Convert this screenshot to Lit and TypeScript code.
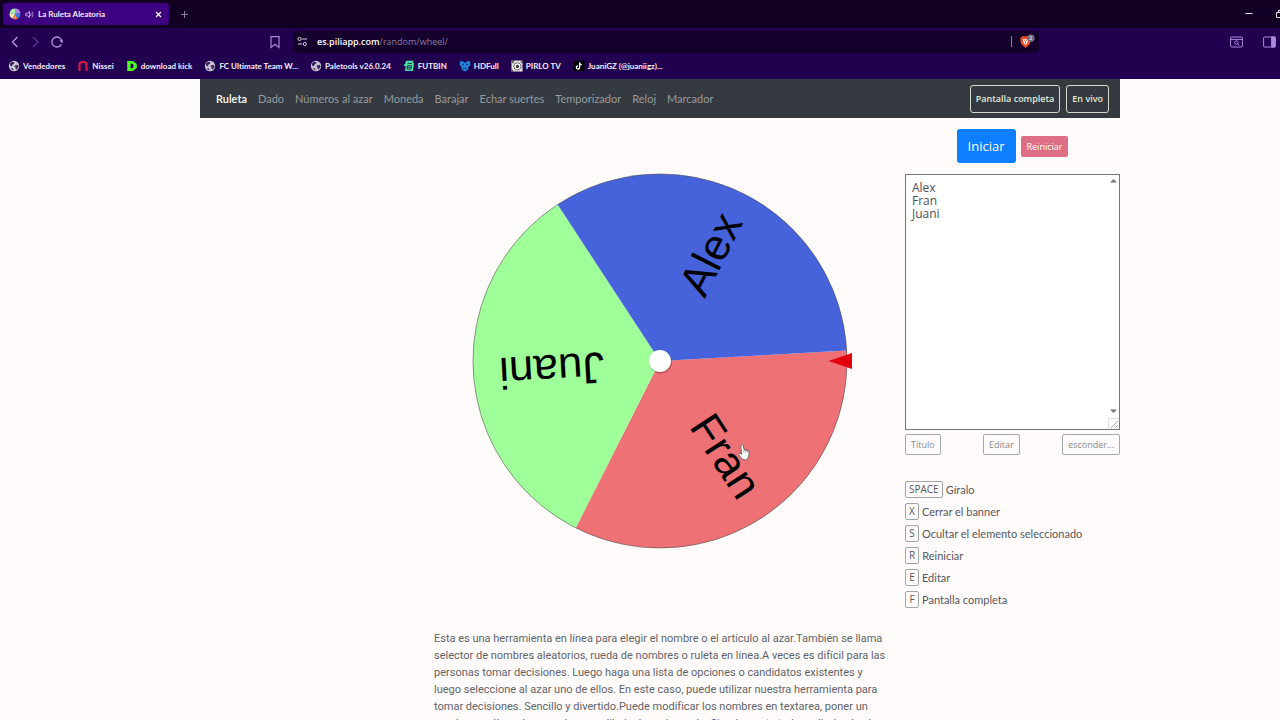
import { LitElement, html, css, svg } from "lit";
import { customElement, property } from "lit/decorators.js";

const UI_FONT = css`"Open Sans", "Noto Sans", sans-serif`;
const TEXT_FONT = css`Lato, "Open Sans", sans-serif`;

const globe = html`<svg class="ico" viewBox="0 0 12 12" aria-hidden="true">
  <circle cx="6" cy="6" r="5.2" fill="#c9c4d4" />
  <path d="M2 3.2 4 1.8 6.4 2.2 6 4 4.2 4.8 3.8 6.4 2 5.6zM7 5.6 9.6 4.8 10.6 6.6 8.8 9.6 7.4 8.6 7.6 7.2 6.4 6.6zM3 8l2 .4.6 1.8L4 9.8z" fill="#3a2560" />
</svg>`;
const nissei = html`<svg class="ico" viewBox="0 0 12 12" aria-hidden="true">
  <path d="M2.5 11V4.5Q2.5 2 6 2t3.5 2.5V11" fill="none" stroke="#d81848" stroke-width="2.2" />
</svg>`;
const kick = html`<svg class="ico" viewBox="0 0 12 12" aria-hidden="true">
  <path d="M1.200 1H7L10.800 4V8L7 11H1.200zM4.600 3.800V8.200H6.400L7.400 7.400V4.600L6.400 3.800z" fill="#4dfb22" fill-rule="evenodd" />
</svg>`;
const futbin = html`<svg class="ico" viewBox="0 0 12 12" aria-hidden="true">
  <path d="M3 .8h7.6L9.800 3H11L10 11H2L2.800 6H.8L1.200 4.200H2z" fill="#4fe3a4" />
  <path d="M4.600 3.400H9M4.400 5.600h4L8 9.200H4zM4 7.400h4.200" fill="none" stroke="#1c3a54" stroke-width="1" />
</svg>`;
const hdfull = html`<svg class="ico" viewBox="0 0 12 12" aria-hidden="true">
  <path d="M1 1.400 3.400 1 6 3 8.600 1 11 1.400 11.400 5 9.600 6.400 9 9.600 6 11.400 3 9.600 2.400 6.400.6 5z" fill="#2388e0" />
  <circle cx="4" cy="4.400" r=".9" fill="#10296b" /><circle cx="8" cy="4.400" r=".9" fill="#10296b" />
  <path d="M4 8.200h4" stroke="#10296b" stroke-width=".8" />
</svg>`;
const pirlo = html`<svg class="ico" viewBox="0 0 12 12" aria-hidden="true">
  <rect x=".5" y=".5" width="11" height="11" fill="#e9e6e2" />
  <path d="M.5.5h3L2 4zM11.500.5V4L9.400 1.600zM.5 11.500V8.400L3 11.500z" fill="#4d4a48" />
  <circle cx="6.400" cy="6.400" r="3.600" fill="#fff" stroke="#4a4642" stroke-width=".8" />
  <path d="M6.400 4.600 8.200 6 7.500 8H5.300L4.600 6z" fill="#3b3733" />
</svg>`;
const tiktok = html`<svg class="ico" viewBox="0 0 12 12" aria-hidden="true">
  <rect x=".4" y=".4" width="11.200" height="11.200" rx="2" fill="#050308" />
  <path d="M6.600 2.600V7.400A1.600 1.600 0 1 1 5 5.800M6.600 2.800Q7 4.600 8.800 4.800" fill="none" stroke="#fff" stroke-width="1.300" />
</svg>`;

const BOOKMARKS = [
  { icon: globe, label: "Vendedores" },
  { icon: nissei, label: "Nissei" },
  { icon: kick, label: "download kick" },
  { icon: globe, label: "FC Ultimate Team W..." },
  { icon: globe, label: "Paletools v26.0.24" },
  { icon: futbin, label: "FUTBIN" },
  { icon: hdfull, label: "HDFull" },
  { icon: pirlo, label: "PIRLO TV" },
  { icon: tiktok, label: "JuaniGZ (@juaniigz)..." },
];

@customElement("browser-chrome")
export class BrowserChrome extends LitElement {
  static styles = css`
    :host { display: block; font-family: ${UI_FONT}; color: #f3eefc; background: #210050; }
    button { font: inherit; color: inherit; background: none; border: 0; padding: 0; display: flex; cursor: pointer; }
    .tabs { display: flex; align-items: center; height: 28px; background: #120024; padding: 0 0 0 3px; }
    .tab { display: flex; align-items: center; gap: 4px; width: 166px; height: 22px; box-sizing: border-box; padding: 0 7px 0 6px; background: #3d0080; border-radius: 4px; }
    .title { flex: 1; white-space: nowrap; }
    .plus { margin-left: 11px; }
    .window { margin-left: auto; display: flex; gap: 23px; overflow: hidden; width: 35px; }
    .bar { display: flex; align-items: center; height: 27px; padding-left: 8px; }
    .nav { display: flex; gap: 7px; align-items: center; flex: 1 0 260px; max-width: 260px; }
    .address { display: flex; align-items: center; flex: 1 1 740px; max-width: 746px; height: 22px; box-sizing: border-box; padding: 0 3px 0 4px; margin-left: 11px; background: #14002a; border-radius: 4px; }
    .url { flex: 1; margin-left: 9px; font-size: 9px; color: #8d7fa6; text-decoration: none; }
    .url b { font-weight: 600; color: #fff; }
    .divider { width: 1px; height: 11px; background: #8f83a5; margin-right: 7px; }
    .side { display: flex; gap: 20px; margin-left: auto; padding-right: 4px; }
    .marks { display: flex; align-items: center; height: 24px; box-sizing: border-box; padding: 0 0 3px 8px; gap: 12px; }
    .mark { display: flex; align-items: center; gap: 3px; color: inherit; text-decoration: none; white-space: nowrap; }
    .title, .mark { font-family: Lato, "Open Sans", sans-serif; font-size: 8px; font-weight: 700; }
    .ico { width: 12px; height: 12px; flex: none; }
  `;
  render() {
    return html`
      <div class="tabs">
        <div class="tab">
          <svg width="12" height="12" viewBox="0 0 12 12" aria-hidden="true">
            <path d="M6 6V.6A5.400 5.400 0 0 1 11.300 5z" fill="#b58ae8" /><path d="M6 6 11.300 5A5.400 5.400 0 0 1 8.600 10.700z" fill="#3a7fe0" />
            <path d="M6 6 8.600 10.700A5.400 5.400 0 0 1 3.200 10.600z" fill="#ee8058" /><path d="M6 6 3.200 10.600A5.400 5.400 0 0 1 .7 5z" fill="#f2f0b4" />
            <path d="M6 6 .7 5A5.400 5.400 0 0 1 6 .6z" fill="#a6efae" />
          </svg>
          <svg width="9" height="9" viewBox="0 0 9 9" fill="none" stroke="#c9b6ec" aria-hidden="true">
            <path d="M.8 3.200h1.600L4.400 1.400v6.200L2.400 5.800H.8z" /><path d="M5.600 3q1 1.500 0 3M7 1.600q2.200 2.900 0 5.800" stroke-width=".8" />
          </svg>
          <span class="title">La Ruleta Aleatoria</span>
          <button aria-label="Cerrar pestaña"><svg width="7" height="7" viewBox="0 0 7 7"><path d="M1 1 6 6M6 1 1 6" stroke="#fff" stroke-width="1.200" /></svg></button>
        </div>
        <button class="plus" aria-label="Nueva pestaña"><svg width="9" height="9" viewBox="0 0 9 9"><path d="M4.500 1v7M1 4.500h7" stroke="#8a7aa0" /></svg></button>
        <div class="window">
          <button aria-label="Minimizar"><svg width="8" height="8" viewBox="0 0 8 8"><path d="M.5 3.500h7" stroke="#e8e2f0" /></svg></button>
          <button aria-label="Restaurar"><svg width="9" height="8" viewBox="0 0 9 8" fill="none" stroke="#e8e2f0"><path d="M2.500 2.500V.5h6v6h-2M.5 2.500h6v5h-6z" /></svg></button>
        </div>
      </div>
      <div class="bar">
        <div class="nav">
          <button aria-label="Atrás"><svg width="14" height="14" viewBox="0 0 14 14" fill="none" stroke="#b59be0" stroke-width="1.300"><path d="M9.500 2 4.500 7l5 5" /></svg></button>
          <button aria-label="Adelante"><svg width="14" height="14" viewBox="0 0 14 14" fill="none" stroke="#5c3a92" stroke-width="1.300"><path d="M4 2l5 5-5 5" /></svg></button>
          <button aria-label="Recargar"><svg width="14" height="14" viewBox="0 0 14 14" fill="none" stroke="#b59be0" stroke-width="1.300"><path d="M11.400 9.200A5 5 0 1 1 11.800 6" /><path d="M9.400 5.400H13L12.400 8.200z" fill="#b59be0" stroke="none" /></svg></button>
        </div>
        <button aria-label="Añadir marcador"><svg width="14" height="14" viewBox="0 0 14 14" fill="none" stroke="#a58ad2" stroke-width="1.200"><path d="M3 1.600h8V12.400L7 9.200 3 12.400z" /></svg></button>
        <div class="address">
          <svg width="11" height="11" viewBox="0 0 11 11" fill="none" stroke="#d6cbe8" aria-hidden="true"><circle cx="2.600" cy="3" r="1.600" /><path d="M5 3h5M1 8h4" /><circle cx="7.800" cy="8" r="1.600" /></svg>
          <a class="url" href="#"><b>es.piliapp.com</b>/random/wheel/</a>
          <span class="divider"></span>
          <button aria-label="Brave Shields">
            <svg width="17" height="15" viewBox="0 0 17 15"><path d="M3.200 2.200H9.800L11.800 4.400 11 10 6.500 14 2 10 1.200 4.400z" fill="#ee4a22" /><path d="M3.600 4.800 6.500 5.600 9.400 4.800 8.400 9 6.500 11 4.600 9z" fill="#fff" /><path d="M5 6.400l1.500 1.200L8 6.400M6.500 8v1.600" stroke="#ee4a22" fill="none" stroke-width=".9" /><circle cx="11.800" cy="4.200" r="3.800" fill="#706a82" /><text x="11.800" y="6.200" font-size="5" text-anchor="middle" fill="#fff">2</text></svg>
          </button>
        </div>
        <div class="side">
          <button aria-label="Buscar pestañas"><svg width="13" height="12" viewBox="0 0 13 12" fill="none" stroke="#a98bdc"><rect x=".6" y="1" width="11.800" height="10" rx="1" /><path d="M.6 3.400h11.800M7.800 8 9.200 9.400" /><circle cx="6.400" cy="6.600" r="1.700" /></svg></button>
          <button aria-label="Panel lateral"><svg width="13" height="12" viewBox="0 0 13 12" fill="none" stroke="#a98bdc"><rect x=".6" y="1" width="11.800" height="10" rx="1" /><path d="M8.600 1h3.400v10H8.600z" fill="#a98bdc" /></svg></button>
        </div>
      </div>
      <nav class="marks">
        ${BOOKMARKS.map((b) => html`<a class="mark" href="#">${b.icon}<span>${b.label}</span></a>`)}
      </nav>
    `;
  }
}

interface Slice { label: string; color: string }

@customElement("name-wheel")
export class NameWheel extends LitElement {
  @property({ attribute: false }) slices: Slice[] = [];
  @property({ type: Number }) rotation = 0;

  static styles = css`
    :host { display: block; }
    .wheel { display: block; width: 100%; height: auto; overflow: visible; }
    .label { font-family: "Liberation Sans", Arial, sans-serif; font-size: 44px; text-anchor: end; fill: #000; }
  `;

  private point(deg: number, r: number) {
    const a = (deg * Math.PI) / 180;
    return `${(r * Math.cos(a)).toFixed(2)} ${(r * Math.sin(a)).toFixed(2)}`;
  }

  render() {
    const step = 360 / this.slices.length;
    return html`<svg class="wheel" viewBox="-226 -194 452 388" role="img" aria-label="Ruleta">
      ${this.slices.map((s, i) => {
        const from = this.rotation + i * step;
        return svg`<path d="M0 0L${this.point(from, 187)}A187 187 0 0 1 ${this.point(from + step, 187)}Z" fill=${s.color} />`;
      })}
      <circle r="187" fill="none" stroke="#444" stroke-opacity=".7" stroke-width=".8" />
      ${this.slices.map((s, i) => svg`<g transform="rotate(${this.rotation + (i + 0.5) * step})"><text class="label" x="161" y="12">${s.label}</text></g>`)}
      <circle cx=".6" cy="1" r="11.400" fill="#000" opacity=".25" />
      <circle r="11" fill="#fff" />
      <path d="M168.500 0 192 -8V8z" fill="#e3000f" />
      <g transform="translate(78 83)">
        <path d="M3.400 1Q4.600 0 5.200 1.200L6 5.400 10 6.400Q11.600 7 11.200 9L10.400 13Q9.600 16 7 16 4.400 16 3.200 13.800L.6 10.400Q.4 9 2 9.200L3.600 10.400 2.800 2z" fill="#fff" stroke="#444" stroke-width=".7" />
        <path d="M6 5.400V8.400M8 5.800V8.600M9.800 6.400V8.800" stroke="#555" stroke-width=".6" />
      </g>
    </svg>`;
  }
}

const NAV = ["Ruleta", "Dado", "Números al azar", "Moneda", "Barajar", "Echar suertes", "Temporizador", "Reloj", "Marcador"];
const KEYS = [
  ["SPACE", "Gíralo"],
  ["X", "Cerrar el banner"],
  ["S", "Ocultar el elemento seleccionado"],
  ["R", "Reiniciar"],
  ["E", "Editar"],
  ["F", "Pantalla completa"],
];
const SLICES: Slice[] = [
  { label: "Fran", color: "#ee7275" },
  { label: "Juani", color: "#9fff98" },
  { label: "Alex", color: "#4763dc" },
];

@customElement("app-root")
export class AppRoot extends LitElement {
  static styles = css`
    :host { display: flex; flex-direction: column; height: 100vh; overflow: hidden; background: #fffbfb; font-family: ${TEXT_FONT}; font-size: 11px; font-variant-ligatures: none; color: #54575b; }
    button, textarea { font-family: ${UI_FONT}; }
    button { cursor: pointer; white-space: nowrap; }
    browser-chrome { flex: none; }
    .page { margin: 0 160px 0 200px; }
    .navbar { display: flex; align-items: center; height: 39px; box-sizing: border-box; padding: 0 11px 0 16px; background: #343a40; }
    .links { display: flex; gap: 11px; }
    .link { color: #989b9f; text-decoration: none; white-space: nowrap; }
    .link.active { color: #fff; font-weight: 600; }
    .actions { display: flex; gap: 6px; margin-left: auto; }
    .light { height: 28px; padding: 0 5px; font-size: 9px; font-weight: 600; color: #e4eada; background: none; border: 1px solid #d3d9cc; border-radius: 3px; }
    .content { display: grid; grid-template-columns: minmax(0, 452fr) 215px; column-gap: 19px; padding-left: 25.434%; }
    name-wheel { margin-top: 49px; }
    .about { margin: 75px 0 0; line-height: 17px; font-family: Roboto, "Open Sans", sans-serif; color: #606368; }
    .run { display: flex; align-items: center; justify-content: center; gap: 5px; height: 34px; margin: 11px 0; }
    .start { height: 34px; padding: 0 11px; font-size: 13px; color: #fff; background: #0d7efd; border: 0; border-radius: 3px; }
    .reset { height: 21px; padding: 0 6px; font-size: 9px; color: #fff; background: #de6e84; border: 0; border-radius: 2px; }
    .box { position: relative; display: flex; }
    .names { width: 100%; height: 256px; box-sizing: border-box; margin: 0; padding: 6px; border: 1px solid #777; border-radius: 0; resize: none; background: #fff; font-size: 12px; line-height: 13px; color: #495057; overflow: hidden; }
    .scroll { position: absolute; top: 1px; right: 1px; bottom: 1px; width: 11px; display: flex; flex-direction: column; justify-content: space-between; pointer-events: none; }
    .tools { display: flex; justify-content: space-between; margin-top: 4px; }
    .tool { height: 21px; padding: 0 5px; font-size: 9px; color: #858a8f; background: none; border: 1px solid #a4a8ac; border-radius: 2px; }
    .keys { margin: 26px 0 0; padding: 0; list-style: none; display: flex; flex-direction: column; gap: 5px; }
    .key { display: flex; align-items: center; gap: 3px; height: 17px; }
    kbd { box-sizing: border-box; min-width: 14px; height: 17px; padding: 0 3px; text-align: center; border: 1px solid #a2a5a8; border-radius: 2px; font-family: ${UI_FONT}; font-size: 10px; line-height: 15px; }
  `;

  render() {
    return html`
      <browser-chrome></browser-chrome>
      <div class="page">
        <nav class="navbar">
          <div class="links">${NAV.map((n, i) => html`<a class="link ${i ? "" : "active"}" href="#">${n}</a>`)}</div>
          <div class="actions"><button class="light">Pantalla completa</button><button class="light">En vivo</button></div>
        </nav>
        <div class="content">
          <main class="center">
            <name-wheel .slices=${SLICES} .rotation=${-3.2}></name-wheel>
            <p class="about">Esta es una herramienta en línea para elegir el nombre o el artículo al azar.También se llama selector de nombres aleatorios, rueda de nombres o ruleta en línea.A veces es difícil para las personas tomar decisiones. Luego haga una lista de opciones o candidatos existentes y luego seleccione al azar uno de ellos. En este caso, puede utilizar nuestra herramienta para tomar decisiones. Sencillo y divertido.Puede modificar los nombres en textarea, poner un nombre por línea. Los nombres se dibujarán en la rueda. Simplemente toda pedir desde el</p>
          </main>
          <aside class="right">
            <div class="run"><button class="start">Iniciar</button><button class="reset">Reiniciar</button></div>
            <div class="box">
              <textarea class="names" aria-label="Nombres" .value=${"Alex\nFran\nJuani"}></textarea>
              <div class="scroll">
                <svg width="11" height="11" viewBox="0 0 11 11"><path d="M2 7.500 5.500 4 9 7.500z" fill="#777" /></svg>
                <svg width="11" height="23" viewBox="0 0 11 23"><path d="M2 3.500 5.500 7 9 3.500z" fill="#777" /><path d="M.5 23V12.500H11" fill="none" stroke="#e4e4e4" /><path d="M3 22 10 15M7 22 10 19" stroke="#999" stroke-width=".8" /></svg>
              </div>
            </div>
            <div class="tools"><button class="tool">Título</button><button class="tool">Editar</button><button class="tool">esconder...</button></div>
            <ul class="keys">${KEYS.map(([k, t]) => html`<li class="key"><kbd>${k}</kbd><span>${t}</span></li>`)}</ul>
          </aside>
        </div>
      </div>
    `;
  }
}
